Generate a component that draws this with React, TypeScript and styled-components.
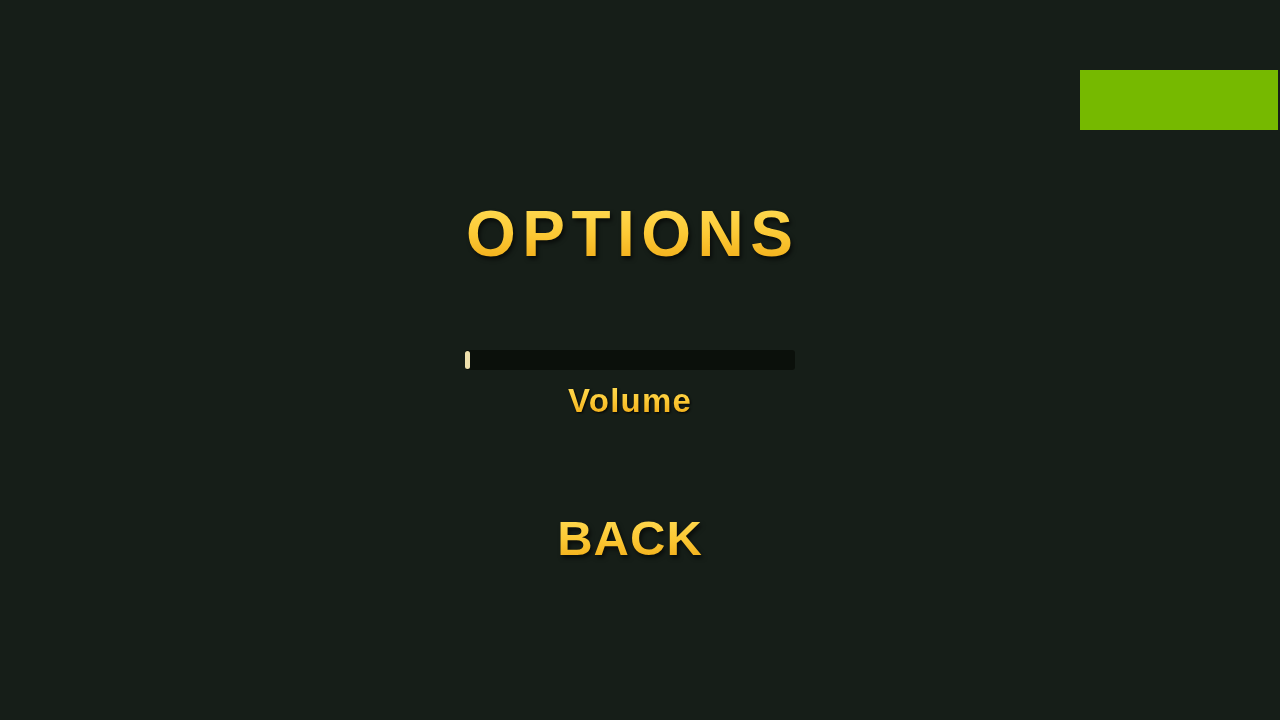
import React, { useState } from 'react'
import styled, { createGlobalStyle } from 'styled-components'

const GlobalStyle = createGlobalStyle`
  html, body {
    margin: 0;
    padding: 0;
    background: #161e18;
  }

  body {
    font-family: 'Liberation Sans', Arial, sans-serif;
  }
`

const Screen = styled.div`
  width: 100%;
  height: 720px;
  display: flex;
  flex-direction: column;
  background: #161e18;
  overflow: hidden;
`

const TopBar = styled.div`
  display: flex;
  justify-content: flex-end;
  padding: 70px 2px 0 0;
`

const Badge = styled.div`
  width: 198px;
  height: 60px;
  background: #76b900;
`

const Menu = styled.div`
  display: flex;
  flex-direction: column;
  align-items: center;
  padding: 70px 21px 0 0;
`

const GoldText = styled.div<{ size: number; spacing: number }>`
  font-family: 'Liberation Sans', Arial, sans-serif;
  font-weight: 700;
  font-size: ${({ size }) => size}px;
  line-height: 1;
  letter-spacing: ${({ spacing }) => spacing}px;
  padding-left: ${({ spacing }) => spacing}px;
  background: linear-gradient(180deg, #ffdc55 0%, #fcc935 50%, #f0aa16 100%);
  -webkit-background-clip: text;
  background-clip: text;
  -webkit-text-fill-color: transparent;
  filter: drop-shadow(2px 3px 2px rgba(0, 0, 0, 0.6));
  user-select: none;
`

const Title = styled(GoldText)`
  margin-top: 2px;
`

const Track = styled.div`
  width: 330px;
  height: 20px;
  margin-top: 84px;
  border-radius: 3px;
  background: #0b100b;
  display: flex;
  align-items: center;
  cursor: pointer;
`

const Thumb = styled.div`
  width: 5px;
  height: 18px;
  border-radius: 3px;
  background: #efe1ad;
`

const Label = styled(GoldText)`
  margin-top: 14px;
  filter: drop-shadow(1px 1px 1px rgba(0, 0, 0, 0.9));
`

const BackButton = styled(GoldText)`
  margin-top: 97px;
  cursor: pointer;
`

export default function App(): JSX.Element {
  const [volume] = useState(0)

  return (
    <>
      <GlobalStyle />
      <Screen>
        <TopBar>
          <Badge />
        </TopBar>

        <Menu>
          <Title size={64} spacing={6.5}>
            OPTIONS
          </Title>

          <Track>
            <Thumb style={{ marginLeft: `${volume * 325}px` }} />
          </Track>
          <Label size={33} spacing={1.2}>
            Volume
          </Label>

          <BackButton size={49} spacing={1}>
            BACK
          </BackButton>
        </Menu>
      </Screen>
    </>
  )
}
